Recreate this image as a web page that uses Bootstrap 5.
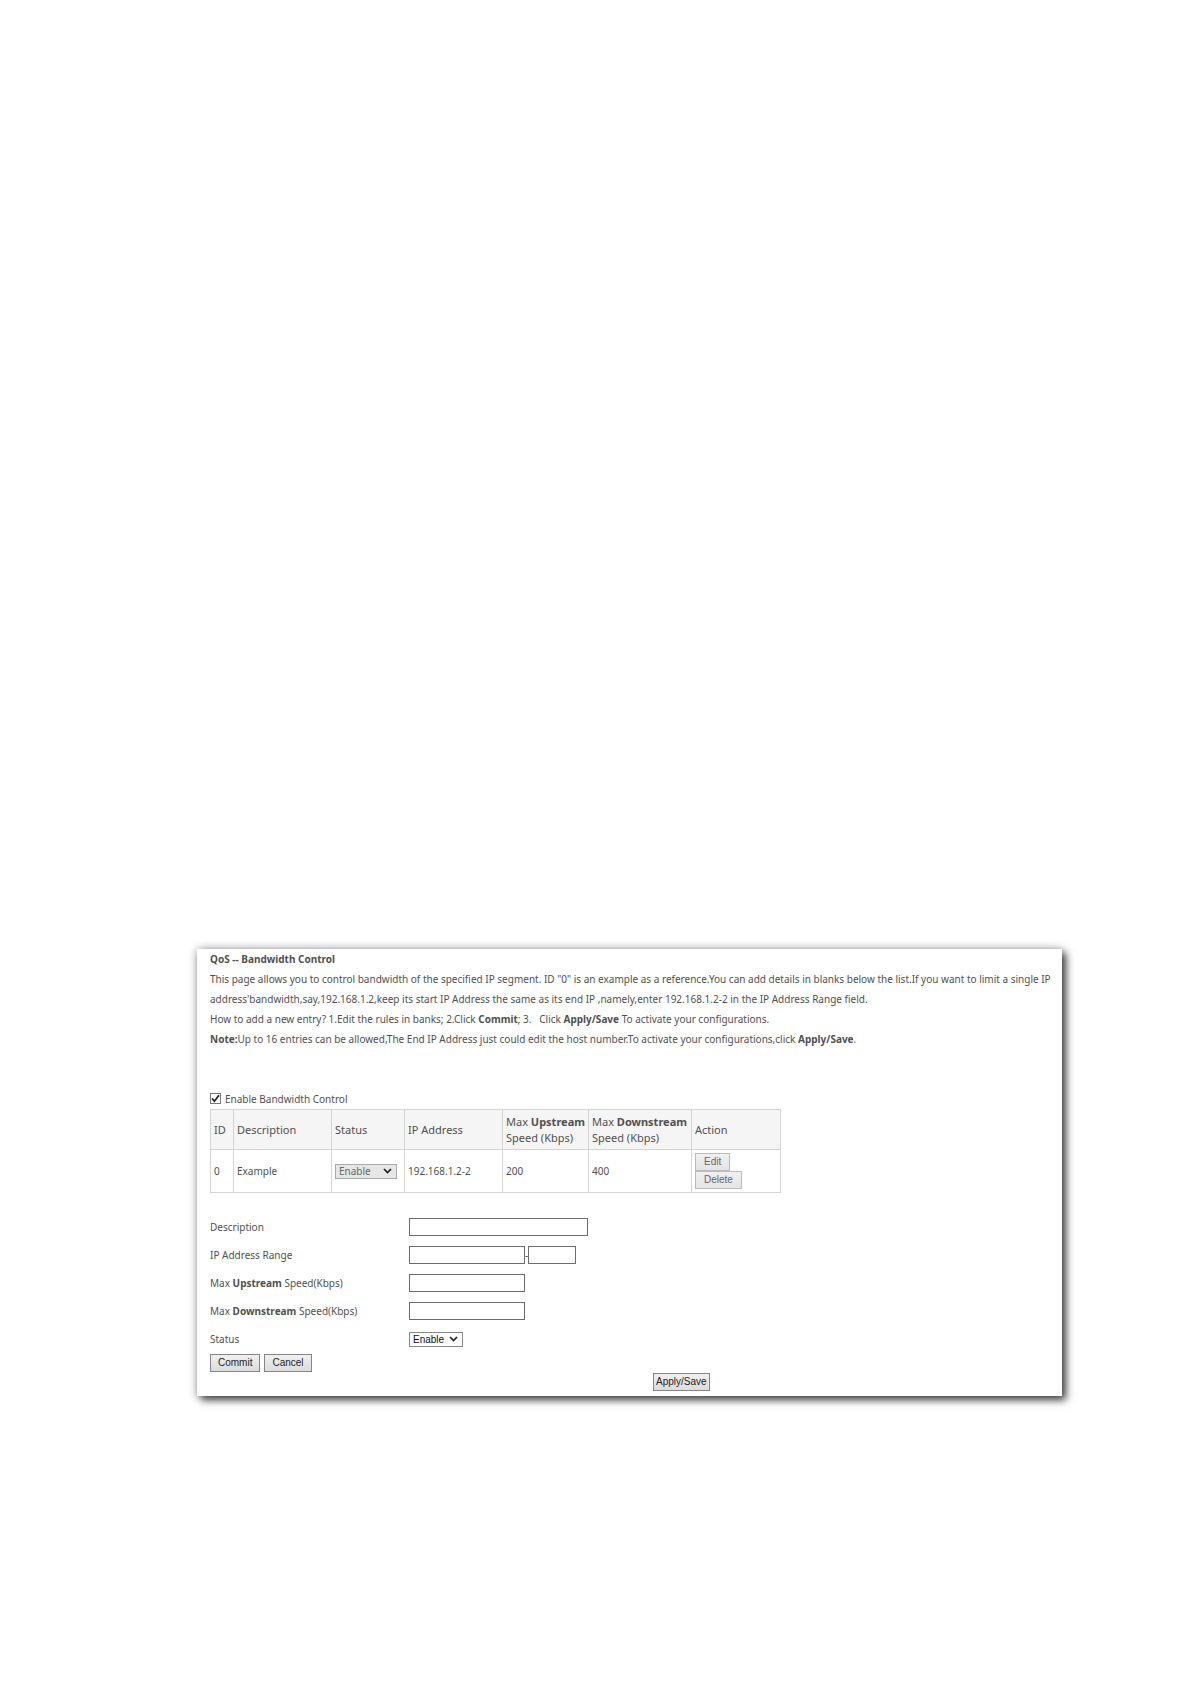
<!DOCTYPE html>
<html lang="en">
<head>
<meta charset="utf-8">
<meta name="viewport" content="width=device-width, initial-scale=1">
<title>QoS -- Bandwidth Control</title>
<link href="https://cdn.jsdelivr.net/npm/bootstrap@5.3.0/dist/css/bootstrap.min.css" rel="stylesheet">
<style>
  body { background: #fff; color: #505050; font: 10px/20px "Noto Sans", sans-serif; }
  .sheet { padding: 949px 129px 288px 197px; }
  .panel { background: #fff; padding: 0 0 5px 13px; box-shadow: 4px 4px 8px rgba(0,0,0,.7), 0 0 9px rgba(0,0,0,.3); }
  .page-title { font-size: 10px; line-height: 20px; font-weight: 700; }
  .enable-row { height: 21px; margin-top: 39px; }
  .tick { appearance: none; width: 11px; height: 11px; margin: 0; border: 1px solid #777; background: #fff; border-radius: 0; }
  .tick:checked { background: url("data:image/svg+xml,%3Csvg xmlns='http://www.w3.org/2000/svg' viewBox='0 0 9 9'%3E%3Cpath d='M1 4.5 3.4 7.2 8 1.3' fill='none' stroke='%23222' stroke-width='1.8'/%3E%3C/svg%3E") center/9px no-repeat; }
  .rules { width: 571px; table-layout: fixed; font-size: 10px; line-height: 16px; color: #505050; border-collapse: collapse; }
  .rules th, .rules td { border: 1px solid #d4d4d4; padding: 0 0 0 3px; vertical-align: middle; white-space: nowrap; }
  .rules th { background: #f5f5f5; font-size: 11px; font-weight: 400; height: 40px; }
  .rules td { height: 43px; }
  .c-id { width: 23px; } .c-desc { width: 98px; } .c-status { width: 73px; } .c-ip { width: 98px; } .c-up { width: 86px; } .c-down { width: 103px; }
  .key { appearance: none; display: block; height: 18px; padding: 0 7px; border: 1px solid #858585; border-radius: 0; background: linear-gradient(#f0f0f0, #dcdcdc); color: #222; font: 10px/16px "Liberation Sans", sans-serif; }
  .key-faint { border-color: #bbb; color: #666; padding: 0 8px; background: linear-gradient(#f0f0f0, #e4e4e4); }
  .key-tight { padding: 0 2px; }
  .pick { appearance: none; display: block; height: 15px; padding: 0 3px; border: 1px solid #888; border-radius: 0; color: #111; font: 10px/13px "Liberation Sans", sans-serif; width: 54px; background: #fff url("data:image/svg+xml,%3Csvg xmlns='http://www.w3.org/2000/svg' viewBox='0 0 9 6'%3E%3Cpath d='M1 1 4.500 4.500 8 1' fill='none' stroke='%23222' stroke-width='1.7'/%3E%3C/svg%3E") right 4px center/9px 6px no-repeat; }
  .pick-off { width: 62px; background-color: #e6e6e6; border-color: #aaa; color: #666; opacity: 1; font: 10px/13px "Noto Sans", sans-serif; }
  .box { height: 18px; width: 116px; border: 1px solid #6c6c6c; border-radius: 0; padding: 0 3px; font-size: 10px; background: #fff; }
  .box-wide { width: 179px; } .box-short { width: 48px; }
  .fields { margin-top: 20px; }
  .line { height: 28px; }
  .line > :first-child { width: 199px; }
  .buttons { gap: 4px; margin-top: 1px; }
  .apply-row { padding-left: 443px; margin-top: 1px; }
</style>
</head>
<body>
<main class="sheet">
  <section class="panel">
    <h1 class="page-title m-0">QoS -- Bandwidth Control</h1>
    <p class="m-0 text-nowrap">This page allows you to control bandwidth of the specified IP segment. ID "0" is an example as a reference.You can add details in blanks below the list.If you want to limit a single IP<br>
    address'bandwidth,say,192.168.1.2,keep its start IP Address the same as its end IP ,namely,enter 192.168.1.2-2 in the IP Address Range field.</p>
    <p class="m-0">How to add a new entry? 1.Edit the rules in banks; 2.Click <b>Commit</b>; 3.&nbsp;&nbsp; Click <b>Apply/Save</b> To activate your configurations.</p>
    <p class="m-0"><b>Note:</b>Up to 16 entries can be allowed,The End IP Address just could edit the host number.To activate your configurations,click <b>Apply/Save</b>.</p>

    <div class="enable-row d-flex align-items-center gap-1">
      <input class="tick" type="checkbox" id="enable" checked>
      <label for="enable">Enable Bandwidth Control</label>
    </div>

    <table class="rules">
      <colgroup><col class="c-id"><col class="c-desc"><col class="c-status"><col class="c-ip"><col class="c-up"><col class="c-down"><col></colgroup>
      <thead>
        <tr><th>ID</th><th>Description</th><th>Status</th><th>IP Address</th><th>Max <b>Upstream</b><br>Speed (Kbps)</th><th>Max <b>Downstream</b><br>Speed (Kbps)</th><th>Action</th></tr>
      </thead>
      <tbody>
        <tr>
          <td>0</td><td>Example</td>
          <td><select class="pick pick-off" aria-label="Example status" disabled><option>Enable</option></select></td>
          <td>192.168.1.2-2</td><td>200</td><td>400</td>
          <td><button type="button" class="key key-faint">Edit</button><button type="button" class="key key-faint">Delete</button></td>
        </tr>
      </tbody>
    </table>

    <form class="fields">
      <div class="line d-flex align-items-center"><label for="desc">Description</label><input class="box box-wide" id="desc" type="text"></div>
      <div class="line d-flex align-items-center"><label for="ip">IP Address Range</label><input class="box" id="ip" type="text"><span>-</span><input class="box box-short" type="text" aria-label="End host number"></div>
      <div class="line d-flex align-items-center"><label for="up">Max <b>Upstream</b> Speed(Kbps)</label><input class="box" id="up" type="text"></div>
      <div class="line d-flex align-items-center"><label for="down">Max <b>Downstream</b> Speed(Kbps)</label><input class="box" id="down" type="text"></div>
      <div class="line d-flex align-items-center"><label for="status">Status</label><select class="pick" id="status"><option>Enable</option></select></div>
      <div class="d-flex buttons">
        <button type="button" class="key">Commit</button>
        <button type="button" class="key">Cancel</button>
      </div>
      <div class="apply-row"><button type="button" class="key key-tight">Apply/Save</button></div>
    </form>
  </section>
</main>
<script src="https://cdn.jsdelivr.net/npm/bootstrap@5.3.0/dist/js/bootstrap.bundle.min.js"></script>
</body>
</html>
